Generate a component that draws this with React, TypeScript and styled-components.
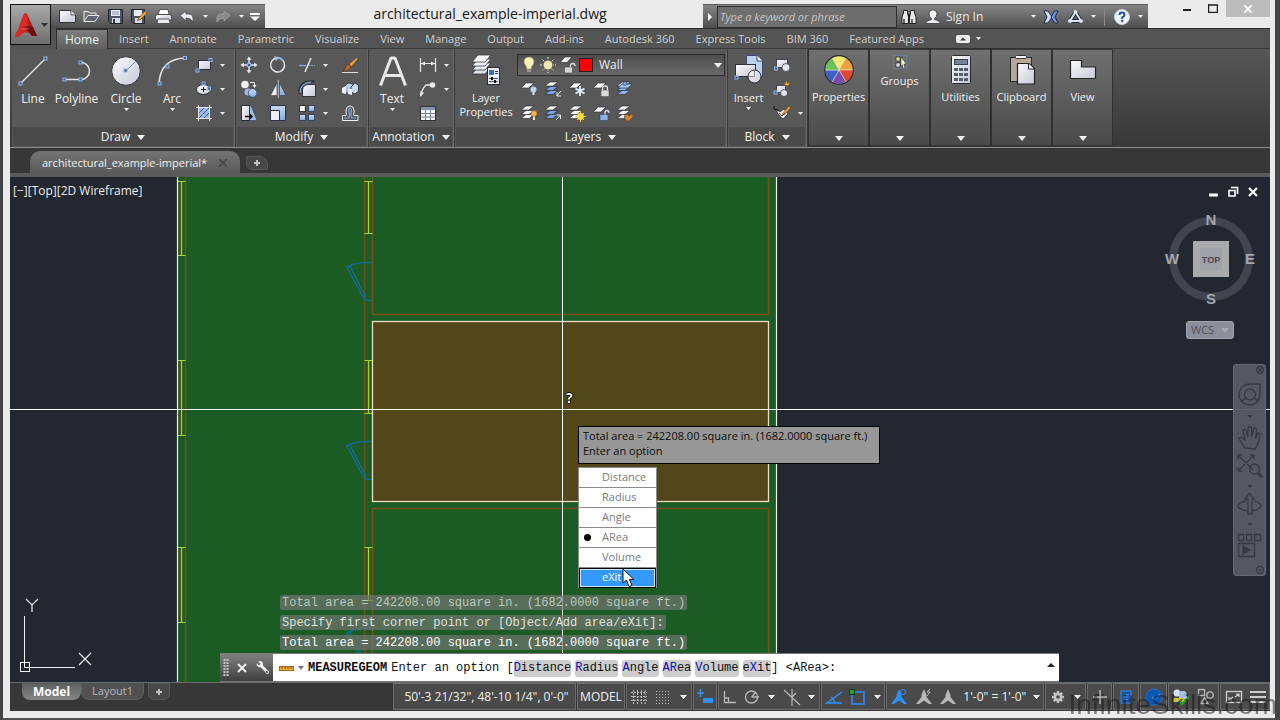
import React from 'react';
import styled, { createGlobalStyle, css } from 'styled-components';

const UI = '"Open Sans", "Noto Sans", sans-serif';
const MONO = '"Liberation Mono", "DejaVu Sans Mono", monospace';

const Global = createGlobalStyle`
  * { box-sizing: border-box; }
  body { margin: 0; background: #444446; font-family: ${UI}; font-size: 12px; line-height: 16px; color: #e8e8e8; overflow: hidden; }
  button, input, select { font: inherit; color: inherit; }
  button { border: 0; padding: 0; background: none; cursor: pointer; white-space: nowrap; }
  svg { display: block; flex: none; }
`;

/* ---------- icon helpers ---------- */

type Kids = { children?: React.ReactNode };

const Ico = ({ w = 18, h = 18, children }: Kids & { w?: number; h?: number }) => (
  <svg width={w} height={h} viewBox={`0 0 ${w} ${h}`} fill="none" aria-hidden="true">{children}</svg>
);

const Caret = ({ w = 7, h = 4, color = '#f2f2f2' }: { w?: number; h?: number; color?: string }) => (
  <svg width={w} height={h} viewBox={`0 0 ${w} ${h}`} aria-hidden="true"><path d={`M0 0H${w}L${w / 2} ${h}Z`} fill={color} /></svg>
);

const Grip = ({ x, y }: { x: number; y: number }) => (
  <rect x={x - 1.5} y={y - 1.5} width="3" height="3" fill="#4a5a78" stroke="#8fb4ee" />
);

const DefsHost = styled.svg`position: absolute;`;
const Defs = () => (
  <DefsHost width="0" height="0" aria-hidden="true">
    <defs>
      <linearGradient id="pale" x1="0" y1="0" x2="1" y2="1">
        <stop offset="0" stopColor="#fbfbfd" /><stop offset="1" stopColor="#c6c9d6" />
      </linearGradient>
      <linearGradient id="blue" x1="0" y1="0" x2="0" y2="1">
        <stop offset="0" stopColor="#c9dcf8" /><stop offset="1" stopColor="#86a9de" />
      </linearGradient>
      <linearGradient id="redA" x1="0" y1="0" x2="1" y2="0">
        <stop offset="0" stopColor="#e8332c" /><stop offset="1" stopColor="#8e1212" />
      </linearGradient>
    </defs>
  </DefsHost>
);

/* ---------- quick access icons ---------- */

const AppLogo = () => (
  <Ico w={24} h={26}>
    <path d="M1 25L9 4Q11 0 13 2L23 24H18Q12 16 5 25Z" fill="url(#redA)" />
    <path d="M9 4L6 16Q2 19 1 25H5Q8 18 14 17L13 2Q10 0 9 4Z" fill="#d92a24" />
    <path d="M6 16Q13 13 19 15L23 24H18Q13 15 6 16Z" fill="#6e0c0e" />
    <path d="M6 16Q12 14 16 17L10 18Z" fill="#f0645c" opacity=".6" />
  </Ico>
);
const NewIcon = () => <Ico w={17} h={15}><path d="M.5 1.5H12L16.5 6V13.5H.5Z" fill="url(#pale)" stroke="#333" /><path d="M12 1.5V6H16.5" fill="#fff" stroke="#555" /></Ico>;
const OpenIcon = () => <Ico w={17} h={15}><path d="M1 12.5V2.5H5L7 4H13V7" stroke="#e8e8ee" fill="#777" /><path d="M1 12.5L5 6.5H16L12 12.5Z" fill="#62656e" stroke="#e8e8ee" /></Ico>;
const SaveIcon = () => <Ico w={15} h={15}><path d="M.5 .5H14.5V14.5H2.5L.5 12.5Z" fill="#4c5566" stroke="#20252e" /><rect x="3" y="1" width="9" height="6" fill="#e9ebf2" /><path d="M4 3H11M4 5H11" stroke="#8890a4" /><rect x="4" y="9" width="8" height="5" fill="#d5d9e4" /><rect x="5" y="10" width="2" height="4" fill="#333a48" /></Ico>;
const SaveAsIcon = () => <Ico w={17} h={15}><path d="M.5 .5H13.5V14.5H2.5L.5 12.5Z" fill="#4c5566" stroke="#20252e" /><rect x="3" y="1" width="8" height="6" fill="#e9ebf2" /><rect x="4" y="9" width="7" height="5" fill="#d5d9e4" /><path d="M7 10L14 2L16 4L9 11L6.500 11.500Z" fill="#f3a63a" stroke="#7a4b12" strokeWidth=".7" /></Ico>;
const PlotIcon = () => <Ico w={17} h={15}><path d="M3 5L5 .5H13L14 5" fill="#fff" stroke="#555" /><rect x=".5" y="5.500" width="16" height="6" rx="2" fill="url(#pale)" stroke="#444" /><path d="M3 10H14L15 14.500H2Z" fill="#eee" stroke="#555" /></Ico>;
const UndoIcon = ({ off }: { off?: boolean }) => <Ico w={16} h={14}><g transform={off ? 'matrix(-1 0 0 1 16 0)' : undefined}><path d="M1 5.500L7 1V4H10Q15 4 14 12Q12 8 7 8V11Z" fill={off ? '#8a8a8a' : '#eef0f6'} stroke={off ? '#a4a4a4' : '#3c3f48'} strokeWidth=".8" /></g></Ico>;
const CustomizeIcon = () => <Ico w={10} h={8}><path d="M0 1H10" stroke="#fff" strokeWidth="2" /><path d="M0 3.500H10L5 8Z" fill="#fff" /></Ico>;

const BinocIcon = () => <Ico w={16} h={16}><path d="M2.500 4V1.500H6.500V4L7.500 8V14.500H1V8ZM9.500 4V1.500H13.500V4L15 8V14.500H8.500V8Z" fill="#e8e8ec" stroke="#222" /><path d="M7 5H9V9H7Z" fill="#222" /><path d="M3 10V14M11 10V14" stroke="#666" strokeWidth="2" /></Ico>;
const UserIcon = () => <Ico w={16} h={16}><path d="M4 4.500Q4 .8 8 .8Q12 .8 12 4.500Q12 8 9.500 9.500V10.500Q15 11.500 15.500 14.500H.5Q1 11.500 6.500 10.500V9.500Q4 8 4 4.500Z" fill="#f1f1f6" stroke="#333" strokeWidth=".8" /></Ico>;
const ExchangeIcon = () => <Ico w={16} h={14}><path d="M1 1H5L9 7L5 13H1L4 7Z" fill="#cfdcf5" stroke="#1e2c4d" /><path d="M15 1H11.500L8 7L11.500 13H15L12 7Z" fill="#6f95d8" stroke="#1e2c4d" /></Ico>;
const A360Icon = () => <Ico w={17} h={15}><path d="M8.500 3L14 12H3Z" stroke="#20283c" strokeWidth="4" strokeLinejoin="round" /><path d="M8.500 3L14 12H3Z" stroke="#dfe4f2" strokeWidth="2" /><circle cx="8.500" cy="3" r="2" fill="#dfe4f2" /><circle cx="14" cy="12" r="2" fill="#dfe4f2" /><circle cx="3" cy="12" r="2" fill="#dfe4f2" /></Ico>;
const HelpIcon = () => <Ico w={16} h={16}><circle cx="8" cy="8" r="7.500" fill="#f0f4fb" stroke="#c8cfdc" /><path d="M5.500 6Q5.500 3.600 8 3.600Q10.500 3.600 10.500 6Q10.500 7.200 8.200 8.300V10" stroke="#24519c" strokeWidth="2" /><circle cx="8.200" cy="12" r="1.200" fill="#24519c" /></Ico>;

/* ---------- ribbon icons ---------- */

const LineIcon = () => <Ico w={32} h={32}><path d="M3 29L28 4" stroke="#f0f0f0" strokeWidth="1.300" /><Grip x={28.5} y={3.500} /><Grip x={3.500} y={28.500} /></Ico>;
const PolyIcon = () => <Ico w={32} h={32}><path d="M3 24.500H20A8.500 8.500 0 0 0 20 7.500" stroke="#e6e6e6" strokeWidth="1.500" /><Grip x={3.500} y={24.500} /><Grip x={19.500} y={24.500} /><Grip x={19.500} y={7.500} /></Ico>;
const CircleIcon = () => <Ico w={32} h={32}><circle cx="16" cy="16" r="14.300" fill="url(#pale)" stroke="#3a3c44" /><path d="M16 16L26 6" stroke="#6b8fd0" /><Grip x={15.500} y={15.500} /></Ico>;
const ArcIcon = () => <Ico w={32} h={32}><path d="M3 29Q4 4 29 3" stroke="#e6e6e6" strokeWidth="1.500" /><Grip x={3.500} y={28.500} /><Grip x={11.500} y={11.500} /><Grip x={29} y={3} /></Ico>;
const RectIcon = () => <Ico><rect x="3.500" y="4.500" width="12" height="9" fill="url(#pale)" stroke="#2e3038" /><Grip x={2.500} y={14.500} /><Grip x={15.500} y={4} /></Ico>;
const EllipseIcon = () => <Ico><ellipse cx="8.500" cy="9.500" rx="7" ry="5" fill="url(#pale)" stroke="#2e3038" /><path d="M6 9.500H11M8.500 7V12" stroke="#222" /><Grip x={14} y={8.500} /><Grip x={8.500} y={3.500} /></Ico>;
const HatchIcon = () => <Ico><rect x="3.500" y="3.500" width="11" height="11" fill="#9db7e4" /><path d="M4 9L9 4M4 14L14 4M9 14L14 9" stroke="#3f5f97" /><path d="M3.500 1V17M14.500 1V17M1 3.500H17M1 14.500H17" stroke="#e8ecf6" /></Ico>;

const MoveIcon = () => <Ico><path d="M9 0L12 4H10V8H14V6L18 9L14 12V10H10V14H12L9 18L6 14H8V10H4V12L0 9L4 6V8H8V4H6Z" fill="#e6e9f2" stroke="#3e4046" strokeWidth=".5" /><Grip x={9} y={9} /></Ico>;
const RotateIcon = () => <Ico><path d="M13.500 4A7 7 0 1 1 8.500 2" stroke="#e2e4ec" strokeWidth="1.500" /><path d="M13.500 4A7 7 0 0 0 7 2" stroke="#8fb0ea" strokeWidth="2" /><path d="M5 0L10 1.500L7 5Z" fill="#a9c4f2" /></Ico>;
const TrimIcon = () => <Ico><path d="M1 9.500H8" stroke="#7fa3e6" strokeWidth="1.500" /><path d="M10 9.500H17" stroke="#7fa3e6" strokeDasharray="2 1" /><path d="M7 16L13 2" stroke="#e8e8ee" strokeWidth="1.500" /></Ico>;
const BrushIcon = () => <Ico><path d="M16.500 1L8 8L10 11L17 3Z" fill="#f1a53c" stroke="#5e3a10" strokeWidth=".6" /><path d="M8 8L10 11Q7 16 2 15Q5 13 5 10Z" fill="#c26a28" stroke="#4b280c" strokeWidth=".6" /><path d="M1 16.500H17" stroke="#ddd" /></Ico>;
const CopyIcon = () => <Ico><circle cx="5" cy="4.500" r="3.800" fill="#f0f1f6" /><circle cx="8" cy="12" r="3.500" fill="#9ebbec" /><circle cx="12.500" cy="13" r="4.300" fill="url(#blue)" stroke="#41506e" strokeWidth=".8" /><path d="M10 2.500H14.500V6" stroke="#e8e8ee" /><path d="M12.500 5H16.500L14.500 8Z" fill="#e8e8ee" /></Ico>;
const MirrorIcon = () => <Ico><path d="M8 3V15.500H1.500Z" fill="#eceef5" stroke="#383a42" strokeWidth=".6" /><path d="M10.500 3V15.500H17Z" fill="url(#blue)" stroke="#383a42" strokeWidth=".6" /><path d="M9.300 0V18" stroke="#ddd" strokeWidth=".8" /></Ico>;
const FilletIcon = () => <Ico><path d="M4.500 16.500V10Q5 4.500 11 4.500H17.500V16.500Z" fill="url(#pale)" stroke="#33353c" /><path d="M1.500 14Q1 2 13 1.500H17" stroke="#30343e" strokeWidth="2.500" /><path d="M2 13Q2 3 13 2" stroke="#9dbcf0" /></Ico>;
const ExplodeIcon = () => <Ico><path d="M3 7L7 3L12 4V10L8 14L3 12Z" fill="url(#blue)" stroke="#3d4454" /><path d="M10 7L14 3L17.500 5V11L14 14L10 12Z" fill="#c8d9f4" stroke="#3d4454" /><path d="M1 8L5 6V14L1 13Z" fill="#eef1f8" /><path d="M7 9H11V15L7 14Z" fill="#e4eaf6" /></Ico>;
const StretchIcon = () => <Ico><path d="M11 1.500L17 16.500H8V1.500Z" fill="#9fbdec" stroke="#3c465a" strokeWidth=".7" /><rect x="1.500" y="1.500" width="8" height="15" fill="url(#pale)" stroke="#2c2e36" /><path d="M5 12.500H11" stroke="#000" strokeWidth="1.500" /><path d="M10 9.500L13 12.500L10 15.500Z" fill="#000" /></Ico>;
const ScaleIcon = () => <Ico><path d="M1.500 1.500H16.500V16.500H1.500Z" fill="url(#blue)" stroke="#2c3240" /><path d="M1.500 6.500H10.500V16.500H1.500Z" fill="#eef0f6" stroke="#2c3240" /></Ico>;
const ArrayIcon = () => <Ico><rect x="1.500" y="1.500" width="6" height="6" fill="#f2f3f7" stroke="#333" /><rect x="10.500" y="1.500" width="6" height="6" fill="url(#blue)" stroke="#39465f" /><rect x="1.500" y="10.500" width="6" height="6" fill="url(#blue)" stroke="#39465f" /><rect x="10.500" y="10.500" width="6" height="6" fill="url(#blue)" stroke="#39465f" /></Ico>;
const OffsetIcon = () => <Ico><path d="M1.500 16.500H17V11.500H13Q12 10.500 13 9V6Q12.500 2 9 2Q5.500 2 5 6V9Q6 10.500 5 11.500H1.500Z" stroke="#eef1f8" /><path d="M3 14H8Q9 9 7.500 7Q7.500 4.500 9 4.500Q10.500 4.500 10.500 7Q9.500 9 10.500 14H15" stroke="#82a5e0" strokeWidth="1.200" /></Ico>;

const TextAIcon = () => <Ico w={32} h={32}><path d="M4.500 30.500L15 3H19L29.500 30.500M9 20.500H25" stroke="#e9e9ec" strokeWidth="3" strokeLinejoin="bevel" /></Ico>;
const DimIcon = () => <Ico><path d="M1.500 2V16M16.500 2V16M2 7.500H16" stroke="#e8e8ee" strokeWidth="1.200" /><path d="M2 7.500L6 5.500V9.500ZM16 7.500L12 5.500V9.500Z" fill="#e8e8ee" /></Ico>;
const LeaderIcon = () => <Ico><path d="M1.500 16Q3 9 7 5H12" stroke="#e8e8ee" strokeWidth="1.300" /><circle cx="13.500" cy="5" r="2.800" fill="#e8e8ee" /><path d="M1 17L1.500 11L5 13Z" fill="#e8e8ee" /></Ico>;
const TableIcon = () => <Ico><rect x="1.500" y="2.500" width="15" height="14" fill="#f2f3f7" stroke="#333" /><path d="M2 4.500H16" stroke="#8b93a8" strokeWidth="3" /><path d="M2 9.500H16M2 13H16M6.500 6V16M11.500 6V16" stroke="#7f8594" /></Ico>;

const sheet = (y: number, fill: string) => (
  <path key={y} d={`M1 ${y + 7}L7 ${y}H20L14 ${y + 7}Z`} fill={fill} stroke="#303238" strokeWidth=".8" />
);
const LayerPropsIcon = () => (
  <Ico w={30} h={32}>
    {sheet(13, '#dfe2ec')}{sheet(9, '#eceef4')}{sheet(5, '#f2f3f8')}{sheet(1, '#ffffff')}
    <rect x="16.500" y="13.500" width="12" height="17" fill="#e9edf6" stroke="#2a2e38" />
    <rect x="18" y="16" width="5" height="5" fill="#3a6fc0" /><path d="M24 17.500H27M24 19.500H27" stroke="#333" />
    <path d="M18 24.500H27M18 27.500H27" stroke="#555" /><path d="M21 23V26M24 26V29" stroke="#111" strokeWidth="2" />
  </Ico>
);
const BulbIcon = () => <Ico w={16} h={18}><path d="M8 1Q13 1 13 6Q13 8 10.500 11V13H5.500V11Q3 8 3 6Q3 1 8 1Z" fill="#fdf3bd" stroke="#8f8250" strokeWidth=".6" /><path d="M6 13.500H10V16H6Z" fill="#9b9b9b" /></Ico>;
const SunIcon = ({ c = '#efe6b4' }: { c?: string }) => <Ico w={18} h={18}><path d="M9 1V17M1 9H17M3.500 3.500L14.500 14.500M14.500 3.500L3.500 14.500" stroke={c} strokeDasharray="2 1" /><circle cx="9" cy="9" r="4.800" fill={c} stroke="#5b573c" strokeWidth=".8" /></Ico>;
const UnlockIcon = () => <Ico w={18} h={18}><path d="M1 6.500L6 1H13L8 6.500Z" fill="#fff" stroke="#222" strokeWidth=".6" /><rect x="5.500" y="11" width="8" height="6" fill="#d4d4d8" stroke="#333" strokeWidth=".5" /><path d="M11.500 11V9Q12 7.500 14 7.500Q16 7.500 16 10" stroke="#ddd" strokeWidth="1.300" /></Ico>;

const one = <path d="M1 8L6 3H14L9 8Z" fill="#fafafc" stroke="#2e3036" strokeWidth=".7" />;
const stack = (mid = '#fafafc') => (
  <>
    <path d="M1 14.500L6 10.500H14L9 14.500Z" fill={mid} stroke="#2e3036" strokeWidth=".7" />
    <path d="M1 10.500L6 6.500H14L9 10.500Z" fill={mid} stroke="#2e3036" strokeWidth=".7" />
    <path d="M1 6L6 2H14L9 6Z" fill="#fafafc" stroke="#2e3036" strokeWidth=".7" />
  </>
);
const LayOff = () => <Ico>{one}<circle cx="13.500" cy="9.500" r="3" fill="#b9d3f5" /><path d="M12.500 12H14.500V15H12.500Z" fill="#dde4f0" /></Ico>;
const LayIso = () => <Ico>{stack('#7da2dd')}<path d="M17 11L13 15.500M13 12V16H17" stroke="#e8e8ee" /></Ico>;
const LayFreeze = () => <Ico>{one}<path d="M12 6V16M7.500 8.500L16.500 13.500M16.500 8.500L7.500 13.500" stroke="#dff1ff" strokeWidth="1.800" /></Ico>;
const LayLock = () => <Ico>{one}<rect x="9" y="10" width="8" height="6.500" fill="#d9d9dc" stroke="#444" strokeWidth=".5" /><path d="M10.500 10V8Q10.500 6 13 6Q15.500 6 15.500 8V10" stroke="#e3e3e6" strokeWidth="1.300" /></Ico>;
const LayMake = () => <Ico>{stack('#8db0e8')}<path d="M2 8L6 4H16L12 8Z" fill="#a9c6f2" stroke="#2a3b5c" strokeWidth=".7" /><circle cx="9" cy="3.500" r="2" fill="#7fa6e6" stroke="#21304e" strokeWidth=".6" /></Ico>;
const LayOn = () => <Ico>{stack()}<circle cx="14" cy="9.500" r="3" fill="#f7b24a" stroke="#7d5010" strokeWidth=".5" /><path d="M13 12.500H15V16H13Z" fill="#f2e2bd" /></Ico>;
const LayUniso = () => <Ico>{stack('#7da2dd')}<path d="M12 16L16.500 11M12.500 11H16.500V15" stroke="#e8e8ee" /></Ico>;
const LayThaw = () => <Ico>{stack()}<path d="M12.500 7V18M7 12.500H18M9 9L16 16M16 9L9 16" stroke="#f7cf3f" /><circle cx="12.500" cy="12.500" r="3.400" fill="#ffd93f" /></Ico>;
const LayUnlock = () => <Ico>{one}<rect x="8" y="10.500" width="8" height="6" fill="#8fb0e6" stroke="#34445f" strokeWidth=".6" /><path d="M13 10.500V8Q13.500 6.500 15 6.500Q17 6.500 17 9" stroke="#cddcf5" strokeWidth="1.300" /></Ico>;
const LayMatch = () => <Ico>{stack()}<path d="M8 12L11 10L13 12L16.500 9.500L17 13L13 17H10Z" fill="#c7853c" stroke="#5c3813" strokeWidth=".6" /></Ico>;

const InsertIcon = () => (
  <Ico w={32} h={32}>
    <path d="M13.500 1.500H24L29.500 7V22.500H13.500Z" fill="#b9d0f2" stroke="#384865" /><path d="M24 1.500V7H29.500" fill="#fff" stroke="#384865" />
    <rect x="2.500" y="10.500" width="20" height="12" fill="url(#pale)" stroke="#2e3038" />
    <circle cx="21.500" cy="22.500" r="6.500" fill="url(#pale)" stroke="#2e3038" /><path d="M21.500 16V22.500H15" stroke="#6f7480" strokeWidth=".8" /><Grip x={3.500} y={23.500} />
  </Ico>
);
const BlockIcon = () => <Ico><rect x="3.500" y="3.500" width="11" height="8" fill="url(#pale)" stroke="#2e3038" strokeWidth=".8" /><circle cx="13" cy="11.500" r="4" fill="#e3e5ec" stroke="#3c3e46" strokeWidth=".8" /><Grip x={3} y={12.500} /></Ico>;
const BlockEditIcon = () => <Ico><rect x="3.500" y="5.500" width="9" height="7" fill="url(#pale)" stroke="#2e3038" strokeWidth=".8" /><circle cx="11" cy="13" r="3.500" fill="#e3e5ec" stroke="#3c3e46" strokeWidth=".8" /><path d="M11 5L14 1L14.500 3.500L17.500 2L15 6L13 5.500Z" fill="#f7b13c" stroke="#6b440e" strokeWidth=".4" /><Grip x={2.500} y={12.500} /></Ico>;
const AttIcon = () => <Ico><path d="M3 5L5 10L10 15L15 10L11 5L7 8Z" fill="#f3f3ee" stroke="#2e3038" strokeWidth=".8" /><path d="M1 2V5Q3 6 6 6" stroke="#111" /><path d="M9 10L16 2L17.500 4L11 11Z" fill="#eda63b" stroke="#5c3a0e" strokeWidth=".5" /><path d="M6 9L9 12L12 9" stroke="#222" /></Ico>;

const wheel = ['#f6e96b', '#f0a03a', '#e04a2c', '#7a4bb0', '#3a63c8', '#6cc05a'];
const WheelIcon = () => (
  <Ico w={32} h={32}>
    {wheel.map((c, i) => {
      const a = ((i * 60 - 120) * Math.PI) / 180;
      const b = ((i * 60 - 60) * Math.PI) / 180;
      return <path key={c} d={`M16 16L${16 + 14 * Math.cos(a)} ${16 + 14 * Math.sin(a)}A14 14 0 0 1 ${16 + 14 * Math.cos(b)} ${16 + 14 * Math.sin(b)}Z`} fill={c} stroke="#f1efe6" strokeWidth=".5" />;
    })}
    <circle cx="16" cy="16" r="14.300" stroke="#26262a" strokeWidth="1.200" />
  </Ico>
);
const GroupsIcon = () => <Ico w={16} h={16}><rect x="1.500" y="1.500" width="13" height="13" stroke="#6b8fd6" strokeDasharray="1 1" /><rect x="4" y="3" width="4" height="4" fill="#d5e08a" stroke="#222" strokeWidth=".6" /><rect x="4" y="9" width="4" height="4" fill="#dfe5f5" stroke="#222" strokeWidth=".6" /><path d="M9 3L14.500 10H12L13 14L11 14.500L10.500 11L9 12Z" fill="#f2efc0" stroke="#222" strokeWidth=".5" /></Ico>;
const CalcIcon = () => (
  <Ico w={32} h={32}>
    <rect x="6.500" y="1.500" width="19" height="28" rx="1" fill="url(#pale)" stroke="#2a2c34" /><rect x="9.500" y="5.500" width="13" height="5" fill="#7b8294" stroke="#3a3e4a" />
    {[14, 19, 24].map((y) => [9, 14, 19].map((x) => <rect key={`${x}-${y}`} x={x} y={y} width="4" height="3" fill="#555c6e" />))}
  </Ico>
);
const ClipIcon = () => <Ico w={32} h={32}><rect x="4.500" y="3.500" width="21" height="24" fill="#b3a89a" stroke="#2c2a28" /><rect x="9.500" y="1.500" width="11" height="3" rx="1" fill="#f5f5f7" stroke="#333" /><path d="M11.500 9.500H23L28.500 14.500V30H11.500Z" fill="url(#pale)" stroke="#222" strokeWidth="1.200" /><path d="M22.500 9.500V15H28" fill="#fff" stroke="#222" /></Ico>;
const ViewIcon = () => <Ico w={32} h={32}><path d="M3.500 6.500H14.500V13H28.500V24.500H3.500Z" fill="url(#pale)" stroke="#26262a" strokeWidth="1.200" /></Ico>;

/* ---------- shell ---------- */

const Shell = styled.div`
  min-height: 100vh;
  display: flex;
  flex-direction: column;
  margin: 0 5px 0 3px;
  padding: 0 5px 7px 7px;
  background: #ebebeb;
  border-bottom: 2px solid #505052;
`;
const Header = styled.header`
  display: grid;
  grid-template-columns: 46px 1fr;
  grid-template-rows: 28px 21px;
  background: linear-gradient(#ebebeb 0 28px, #545454 28px);
`;
const AppButton = styled.button`
  grid-row: 1 / 3;
  width: 41px;
  height: 41px;
  margin-top: 4px;
  display: flex;
  align-items: center;
  justify-content: center;
  gap: 3px;
  border: 1px solid #111;
  background: linear-gradient(#a9a9a9, #6e6e6e);
`;
const TitleBar = styled.div`
  display: flex;
  align-items: flex-end;
  margin-left: -5px;
`;
const DarkStrip = styled.div`
  display: flex;
  align-items: center;
  height: 24px;
  padding: 0 2px 0 4px;
  border-top: 1px solid #5c5c5c;
  background: linear-gradient(#858585, #4e4e4e);
`;
const Slot = styled.button<{ $w: number }>`
  width: ${(p) => p.$w}px;
  height: 22px;
  display: flex;
  align-items: center;
  justify-content: center;
`;
const WindowTitle = styled.h1`
  flex: 1;
  margin: 0;
  padding-left: 12px;
  align-self: center;
  text-align: center;
  font-size: 14px;
  font-weight: 400;
  color: #161616;
`;
const InfoStrip = styled(DarkStrip)`padding: 0 2px 0 0;`;
const Search = styled.input`
  width: 180px;
  height: 22px;
  padding: 0 2px;
  border: 1px solid #2e2e2e;
  border-radius: 0;
  font-size: 11px;
  background: #6e6e6e;
  outline: none;
  &::placeholder { color: #c4c4c4; opacity: 1; font-style: italic; }
`;
const SignIn = styled.button`
  flex: none;
  width: 82px;
  padding-left: 1px;
  text-align: left;
`;
const Rule = styled.span`width: 1px; height: 18px; margin: 0 5px; background: #8a8a8a;`;
const WindowButtons = styled.div`
  display: flex;
  align-self: flex-start;
  margin-left: 26px;
`;
const WinButton = styled.button<{ $close?: boolean }>`
  width: ${(p) => (p.$close ? 44 : 26)}px;
  height: 17px;
  display: flex;
  align-items: center;
  justify-content: center;
  ${(p) => p.$close && css`background: #bcbcbc;`}
`;

const Tabs = styled.nav`
  display: flex;
  align-items: stretch;
  font-size: 11px;
  border-top: 1px solid #2e2e2e;
  border-bottom: 1px solid #383838;
`;
const Tab = styled.button<{ $on?: boolean }>`
  padding: 0 9px 0 10px;
  color: #cfcfcf;
  border: 1px solid transparent;
  border-bottom: 0;
  ${(p) => p.$on && css`
    color: #f0f0f0;
    margin-bottom: -1px;
    font-size: 12px;
    padding: 0 8px;
    border-color: #2e2e2e;
    background: linear-gradient(#7d7d7d, #5f5f5f);
  `}
`;
const TabExtra = styled.button`
  display: flex;
  align-items: center;
  gap: 6px;
  margin-left: 22px;
`;

/* ---------- ribbon ---------- */

const Ribbon = styled.section`
  display: flex;
  height: 99px;
  padding-left: 2px;
  background: linear-gradient(#565656, #383838);
  border-bottom: 1px solid #8c8c8c;
`;
const PanelBox = styled.div<{ $w: number }>`
  width: ${(p) => p.$w}px;
  flex: none;
  display: flex;
  flex-direction: column;
  background: #585858;
  border-right: 1px solid #3a3a3a;
  box-shadow: inset -1px 0 #686868;
`;
const PanelBody = styled.div`height: 78px; display: flex; padding-top: 4px;`;
const PanelTitle = styled.button`
  height: 19px;
  margin: 0 2px 0 1px;
  padding-top: 1px;
  display: flex;
  align-items: center;
  justify-content: center;
  gap: 7px;
  background: #4a4a4a;
  color: #f2f2f2;
`;
const Panel = ({ w, title, children }: Kids & { w: number; title: string }) => (
  <PanelBox $w={w}>
    <PanelBody>{children}</PanelBody>
    <PanelTitle>{title}<Caret w={8} h={5} /></PanelTitle>
  </PanelBox>
);
const BigButton = styled.button<{ $w: number; $tight?: boolean }>`
  width: ${(p) => p.$w}px;
  height: 74px;
  padding-top: ${(p) => (p.$tight ? 1 : 2)}px;
  display: flex;
  flex-direction: column;
  align-items: center;
  font-size: ${(p) => (p.$tight ? 11 : 12)}px;
  line-height: 14px;
  white-space: pre-line;
  color: #f0f0f0;
  & > svg:first-child { margin-bottom: 5px; }
  & > svg + svg { margin-top: 2px; }
`;
const Big = ({ w, label, icon, menu, tight }: { w: number; label: string; icon: React.ReactNode; menu?: boolean; tight?: boolean }) => (
  <BigButton $w={w} $tight={tight}>{icon}{label}{menu && <Caret w={5} h={3} />}</BigButton>
);
const Column = styled.div<{ $w: number }>`
  width: ${(p) => p.$w}px;
  display: flex;
  flex-direction: column;
`;
const Small = styled.button`
  height: 24px;
  display: flex;
  align-items: center;
  justify-content: flex-start;
  padding-left: 4px;
  gap: 7px;
`;
const Tools = ({ w, items, menus = [] }: { w: number; items: React.ReactNode[]; menus?: number[] }) => (
  <Column $w={w}>
    {items.map((it, i) => <Small key={i}>{it}{menus.includes(i) && <Caret w={5} h={3} />}</Small>)}
  </Column>
);
const LayerArea = styled.div`flex: 1; padding: 1px 2px 0 0;`;
const LayerCombo = styled.div`
  display: flex;
  align-items: center;
  gap: 2px;
  height: 22px;
  padding: 0 2px 0 3px;
  margin-bottom: 1px;
  border: 1px solid #2c2c2c;
  background: linear-gradient(#4e4e4e, #696969);
`;
const Swatch = styled.span`width: 14px; height: 14px; margin-right: 4px; background: #fe0000; border: 1px solid #222;`;
const LayerSelect = styled.select`
  flex: 1;
  min-width: 0;
  appearance: none;
  border: 0;
  padding: 0;
  background: transparent;
  outline: none;
`;
const LayerGrid = styled.div`
  display: grid;
  grid-template-columns: repeat(5, 24px);
  grid-auto-rows: 24px;
`;
const LayerTool = styled.button`display: flex; align-items: center; justify-content: center;`;
const FoldedPanel = styled.button`
  width: 59px;
  margin: 0 1px 2px;
  padding: 4px 0;
  display: flex;
  flex-direction: column;
  align-items: center;
  font-size: 11px;
  color: #f0f0f0;
  border: solid #3a3a3a;
  border-width: 1px 0 0;
  outline: 1px solid #303030;
  background: linear-gradient(#707070, #4a4a4a);
  & > svg:first-child { margin-bottom: 3px; }
  & > svg:last-child { margin-top: auto; margin-bottom: 0; }
`;

/* ---------- document tabs ---------- */

const DocTabs = styled.div`
  display: flex;
  align-items: flex-end;
  height: 29px;
  padding-left: 20px;
  background: #373737;
  border-bottom: 4px solid #5a5a5a;
`;
const DocTab = styled.button`
  height: 22px;
  display: flex;
  align-items: center;
  gap: 12px;
  padding: 2px 13px 0 12px;
  border-radius: 10px 10px 0 0;
  font-size: 11px;
  background: linear-gradient(#747474, #5a5a5a);
  color: #f0f0f0;
`;
const AddTab = styled.button<{ $foot?: boolean }>`
  width: 22px;
  height: ${(p) => (p.$foot ? 17 : 14)}px;
  display: flex;
  align-items: center;
  justify-content: center;
  margin: ${(p) => (p.$foot ? '0' : '0 0 3px 6px')};
  border: 1px solid #585858;
  border-radius: ${(p) => (p.$foot ? '0 0 6px 6px' : '2px 8px 2px 6px')};
  background: #484848;
`;
const Plus = () => <Ico w={8} h={8}><path d="M4 1V7M1 4H7" stroke="#c2c2c2" strokeWidth="2" /></Ico>;

/* ---------- drawing area ---------- */

const Canvas = styled.main`
  position: relative;
  flex: 1;
  min-height: 400px;
  overflow: hidden;
  background: #222730;
`;
const DrawingSvg = styled.svg`position: absolute; inset: 0; width: 100%; height: 100%;`;

const Opening = ({ x, y, h }: { x: number; y: number; h: number }) => (
  <g>
    <rect x={x - 3} y={y} width="7" height={h} fill="#2f5a1c" />
    <path d={`M${x - 3.500} ${y + 0.500}h8M${x - 3.500} ${y + h + 0.500}h8M${x + 0.500} ${y}v${h}`} stroke="#a0d838" strokeWidth="1.200" />
  </g>
);
const Door = ({ y }: { y: number }) => (
  <path d={`M362 ${y - 2.500}Q345 ${y - 3} 337 ${y + 2}L354 ${y + 34}Q356 ${y + 36} 362 ${y + 35.500}M340 ${y + 1}L356 ${y + 33}`} stroke="#146a96" strokeWidth="1.500" />
);
const Drawing = () => (
  <DrawingSvg fill="none" aria-label="Floor plan">
    <rect x="167" width="600" height="100%" fill="#1a5c23" />
    {[175.5, 354.5].map((x) => <path key={x} d={`M${x} 0V2000`} stroke="#70501a" strokeWidth="1.500" />)}
    <path d="M362.500 0V137.500H758.500V0M362.500 2000V331.500H758.500V2000" stroke="#79501a" strokeWidth="1.500" />
    {[[4, 74, 52], [183, 75, 53], [370, 75, 53]].map(([y, a, b]) => (
      <g key={y}><Opening x={171} y={y} h={a} /><Opening x={358} y={y} h={b} /></g>
    ))}
    <Door y={88} /><Door y={267} /><Door y={454} />
    <rect x="362.500" y="144.500" width="396" height="180" fill="#51471a" stroke="#f0dcc4" strokeWidth="1.300" />
    <path d="M167.500 0V2000M766.500 0V2000" stroke="#f2f2ea" strokeWidth="1.200" />
    <path d="M552.500 0V2000M0 232.500H4000" stroke="#ffffff" />
  </DrawingSvg>
);

const ViewLabel = styled.div`position: absolute; left: 3px; top: 6px; color: #ececec;`;
const Ucs = styled.svg`position: absolute; left: 8px; bottom: 8px;`;
const ViewButtons = styled.div`position: absolute; right: 11px; top: 9px; display: flex; gap: 9px;`;
const ViewCube = styled.div`position: absolute; right: 12px; top: 35px;`;
const Wcs = styled.button`
  position: absolute;
  right: 36px;
  top: 144px;
  width: 48px;
  height: 18px;
  display: flex;
  align-items: center;
  justify-content: space-between;
  padding: 0 4px;
  font-size: 11px;
  color: #4d505a;
  background: #8c8f9b;
  border: 1px solid #a3a6b0;
  border-radius: 3px;
`;
const NavBar = styled.div`
  position: absolute;
  right: 4px;
  top: 187px;
  width: 33px;
  height: 212px;
  display: flex;
  justify-content: center;
  background: #585b63;
  border: 1px solid #6a6d74;
  border-radius: 3px;
  opacity: .95;
`;
const QuestionMark = styled.span`
  position: absolute;
  left: 556px;
  top: 212px;
  font: 700 14px/17px ${UI};
  color: #fff;
  text-shadow: 1px 0 #000, -1px 0 #000, 0 1px #000, 0 -1px #000;
`;
const Tooltip = styled.div`
  position: absolute;
  left: 568px;
  top: 249px;
  width: 302px;
  height: 38px;
  padding: 1px 4px;
  font-size: 11px;
  line-height: 15px;
  white-space: nowrap;
  color: #0c0c0c;
  background: #979797;
  border: 1px solid #000;
`;
const OptionMenu = styled.div`
  position: absolute;
  left: 568px;
  top: 290px;
  width: 79px;
  font-size: 11px;
  border: 1px solid #8c8c8c;
  border-bottom: 0;
  background: #fff;
`;
const Option = styled.button<{ $on?: boolean }>`
  position: relative;
  display: block;
  width: 100%;
  height: 20px;
  padding: 0 0 2px ${(p) => (p.$on ? 22 : 23)}px;
  text-align: left;
  color: #7a7a7a;
  border-bottom: 1px solid #8c8c8c;
  ${(p) => p.$on && css`color: #fff; background: #3399ff; border: 1px solid #000; box-shadow: inset 0 0 0 1px #cfe6ff;`}
`;
const Dot = styled.span`position: absolute; left: 5px; top: 6px; width: 7px; height: 7px; border-radius: 50%; background: #000;`;
const Pointer = styled.svg`position: absolute; left: 612px; top: 391px;`;

const History = styled.div`
  position: absolute;
  left: 270px;
  bottom: 32px;
  display: flex;
  flex-direction: column;
  align-items: flex-start;
  gap: 5px;
`;
const HistoryLine = styled.div<{ $c: string }>`
  height: 15px;
  padding: 0 2px;
  font: 12px/16px ${MONO};
  white-space: pre;
  color: ${(p) => p.$c};
  background: rgba(112, 116, 112, .72);
  border-radius: 2px;
`;
const CommandBar = styled.div`
  position: absolute;
  left: 210px;
  bottom: 0;
  width: 839px;
  height: 29px;
  display: flex;
  align-items: stretch;
  background: #fff;
  border: solid #777;
  border-width: 1px 0;
`;
const CommandTools = styled.div`
  width: 53px;
  display: flex;
  align-items: center;
  justify-content: space-between;
  padding: 0 3px;
  background: linear-gradient(#828282, #3f3f3f);
`;
const CommandText = styled.div`
  flex: 1;
  display: flex;
  align-items: center;
  gap: 4px;
  padding: 1px 6px 0;
  font: 12px/17px ${MONO};
  color: #101010;
  white-space: pre;
`;
const Prompt = styled.span`display: flex; align-items: center;`;
const Chips = styled.span`display: flex; gap: 4px;`;
const Chip = styled.button`
  height: 17px;
  font: inherit;
  background: #cdcdcd;
  border-radius: 3px;
  b { font-weight: 400; color: #1212b4; }
`;
const IconBtn = styled.button`display: flex; align-items: center; gap: 4px;`;

/* ---------- status bar ---------- */

const Status = styled.footer`
  display: flex;
  align-items: flex-start;
  justify-content: space-between;
  height: 29px;
  padding-left: 12px;
  background: #373737;
  border-top: 1px solid #6a6a6a;
`;
const SheetTabs = styled.div`display: flex;`;
const SheetTab = styled.button<{ $on?: boolean }>`
  height: 17px;
  padding: 0 ${(p) => (p.$on ? 11 : 10)}px;
  border-radius: 0 0 8px 8px;
  font-size: ${(p) => (p.$on ? 12 : 11)}px;
  font-weight: ${(p) => (p.$on ? 700 : 400)};
  color: ${(p) => (p.$on ? '#ffffff' : '#b9b9b9')};
  background: ${(p) => (p.$on ? 'linear-gradient(#5c5c5c, #888)' : '#505050')};
  border: ${(p) => (p.$on ? 0 : '1px solid #5e5e5e')};
  border-top: 0;
  margin-right: ${(p) => (p.$on ? 0 : 4)}px;
`;
const StatusCells = styled.div`display: flex; gap: 1px; height: 27px;`;
const Cell = styled.div<{ $w: number }>`
  width: ${(p) => p.$w}px;
  display: flex;
  align-items: center;
  justify-content: space-around;
  color: #f0f0f0;
  white-space: nowrap;
  background: #4a4a4a;
  border: 1px solid #6c6c6c;
`;
const Coordinates = styled(Cell)`padding-left: 4px;`;
const Watermark = styled.div`
  position: fixed;
  right: 3px;
  bottom: 0;
  font: 28px/30px "Liberation Sans", sans-serif;
  color: rgba(20, 20, 20, .5);
  pointer-events: none;
`;

const Human = ({ c, extra }: { c: string; extra?: React.ReactNode }) => (
  <Ico w={18} h={18}><path d="M9 1L11.500 7V9L17 16H14L9 12.500L4 16H1L6.500 9V7Z" fill={c} />{extra}</Ico>
);
const G = '#b8b8b8';
const B = '#2e8fff';

const GridIcon = () => <Ico w={16} h={16}><path d="M2.500 1V15M6.500 1V15M10.500 1V15M14 1V15M0 3.500H16M0 7.500H16M0 11.500H16" stroke={G} strokeDasharray="2 1" /></Ico>;
const SnapIcon = () => <Ico w={16} h={16}>{[2, 5, 8, 11, 14].map((y) => <path key={y} d={`M1 ${y}.5H15`} stroke={G} strokeDasharray="1 2" />)}</Ico>;
const DynIcon = () => <Ico><path d="M4.500 1V9M1 5H8" stroke={B} strokeWidth="1.500" /><rect x="7" y="10" width="10" height="5" rx="1" fill={B} /></Ico>;
const OrthoIcon = () => <Ico w={14} h={14}><path d="M1.500 1V12.500H13M1.500 8H5.500V12.500" stroke={G} strokeWidth="1.300" /></Ico>;
const PolarIcon = () => <Ico w={16} h={16}><circle cx="7.500" cy="8" r="6" stroke={G} strokeWidth="1.300" /><path d="M7.500 8H15M7.500 8L12 3" stroke={G} strokeWidth="1.300" /></Ico>;
const IsoIcon = () => <Ico><path d="M1 2L17 17M9 1V18M9 9L13 5" stroke={G} strokeWidth="1.200" /></Ico>;
const TrackIcon = () => <Ico><path d="M17 4L2 15H17M6 9Q9 11 10 15" stroke={B} strokeWidth="1.500" /></Ico>;
const OsnapIcon = () => <Ico><rect x="3" y="4" width="12" height="12" stroke={B} strokeWidth="1.500" /><rect x=".5" y="1.500" width="5" height="5" fill="#1fa33a" stroke="#0b3d14" /></Ico>;
const GearIcon = () => <Ico w={14} h={14}><path d="M7 1V13M1 7H13M2.800 2.800L11.200 11.200M11.200 2.800L2.800 11.200" stroke="#c4c4c4" strokeWidth="2.500" /><circle cx="7" cy="7" r="4.200" fill="#c4c4c4" /><circle cx="7" cy="7" r="1.800" fill="#4a4a4a" /></Ico>;
const PlusBig = () => <Ico w={14} h={14}><path d="M7 0V14M0 7H14" stroke={G} strokeWidth="1.500" /></Ico>;
const QuickPropIcon = () => <Ico w={14} h={14}><rect x="2" y="1" width="10" height="12" fill="#1c4f94" stroke={B} /><path d="M4 4.500H10M4 7H10M4 9.500H10" stroke={B} /></Ico>;
const LockUiIcon = () => <Ico><circle cx="9" cy="9" r="8" fill="#0d57b4" stroke="#1f6fd4" /><path d="M7 9L10 12L15 6" stroke="#3d8fee" strokeWidth="1.300" /></Ico>;
const HwIcon = () => <Ico><circle cx="5" cy="5" r="3.500" fill="#d8e4f4" /><path d="M7 3H13L15 6V11H7Z" fill="#a9c0df" /><path d="M1 10H11L15 14H1Z" fill="#c9c739" /><path d="M7 13L10 16L17 9" stroke="#2ba32b" strokeWidth="2" /></Ico>;
const IsolateIcon = () => <Ico><rect x="1.500" y="1.500" width="6" height="6" stroke={G} strokeWidth="1.300" /><circle cx="13" cy="7" r="3.200" stroke={G} strokeWidth="1.300" /><path d="M7.500 9.500L11 15.500H4Z" stroke={G} strokeWidth="1.300" /></Ico>;
const CleanIcon = () => <Ico><rect x="1.500" y="3.500" width="15" height="11" stroke="#d0d0d0" strokeWidth="1.300" /><path d="M4 12L8 9M14 6L10 9M4 9V12H7M14 9V6H11" stroke="#d0d0d0" strokeWidth="1.200" /></Ico>;
const MenuIcon = () => <Ico w={16} h={14}><path d="M0 2H16M0 7H16M0 12H16" stroke="#d0d0d0" strokeWidth="2" /></Ico>;

const ribbonTabs = ['Insert', 'Annotate', 'Parametric', 'Visualize', 'View', 'Manage', 'Output', 'Add-ins', 'Autodesk 360', 'Express Tools', 'BIM 360', 'Featured Apps'];
const folded: [string, React.ReactNode][] = [['Properties', <WheelIcon />], ['Groups', <GroupsIcon />], ['Utilities', <CalcIcon />], ['Clipboard', <ClipIcon />], ['View', <ViewIcon />]];
const layerTools = [LayOff, LayIso, LayFreeze, LayLock, LayMake, LayOn, LayUniso, LayThaw, LayUnlock, LayMatch];
const chips: [string, string, string][] = [['', 'D', 'istance'], ['', 'R', 'adius'], ['', 'A', 'ngle'], ['', 'AR', 'ea'], ['', 'V', 'olume'], ['e', 'X', 'it']];

export default function App() {
  return (
    <Shell>
      <Global />
      <Defs />
      <Header>
        <AppButton aria-label="Application menu"><AppLogo /><Caret w={7} h={4} color="#333" /></AppButton>
        <TitleBar>
          <DarkStrip>
            <Slot $w={24} aria-label="New"><NewIcon /></Slot>
            <Slot $w={24} aria-label="Open"><OpenIcon /></Slot>
            <Slot $w={24} aria-label="Save"><SaveIcon /></Slot>
            <Slot $w={24} aria-label="Save as"><SaveAsIcon /></Slot>
            <Slot $w={24} aria-label="Plot"><PlotIcon /></Slot>
            <Slot $w={24} aria-label="Undo"><UndoIcon /></Slot>
            <Slot $w={12} aria-label="Undo list"><Caret w={5} h={3} /></Slot>
            <Slot $w={24} aria-label="Redo"><UndoIcon off /></Slot>
            <Slot $w={12} aria-label="Redo list"><Caret w={5} h={3} /></Slot>
            <Slot $w={16} aria-label="Customize"><CustomizeIcon /></Slot>
          </DarkStrip>
          <WindowTitle>architectural_example-imperial.dwg</WindowTitle>
          <InfoStrip>
            <Slot $w={14} aria-label="Collapse search"><Ico w={4} h={8}><path d="M0 0L4 4L0 8Z" fill="#fff" /></Ico></Slot>
            <Search placeholder="Type a keyword or phrase" aria-label="Search" />
            <Slot $w={24} aria-label="Find"><BinocIcon /></Slot>
            <Slot $w={24} aria-label="Account"><UserIcon /></Slot>
            <SignIn>Sign In</SignIn>
            <Slot $w={12} aria-label="Account menu"><Caret w={5} h={3} /></Slot>
            <Slot $w={24} aria-label="Exchange"><ExchangeIcon /></Slot>
            <Slot $w={24} aria-label="Autodesk 360"><A360Icon /></Slot>
            <Slot $w={12} aria-label="Autodesk 360 menu"><Caret w={5} h={3} /></Slot>
            <Rule />
            <Slot $w={24} aria-label="Help"><HelpIcon /></Slot>
            <Slot $w={12} aria-label="Help menu"><Caret w={5} h={3} /></Slot>
          </InfoStrip>
          <WindowButtons>
            <WinButton aria-label="Minimize"><Ico w={8} h={8}><path d="M0 5H8" stroke="#222" strokeWidth="2" /></Ico></WinButton>
            <WinButton aria-label="Maximize"><Ico w={10} h={9}><path d="M.5 0V8.500H9.500V1H0" stroke="#222" strokeWidth="1.500" /></Ico></WinButton>
            <WinButton $close aria-label="Close"><Ico w={8} h={8}><path d="M0 0L8 8M8 0L0 8" stroke="#fff" strokeWidth="1.800" /></Ico></WinButton>
          </WindowButtons>
        </TitleBar>
        <Tabs>
          <Tab $on>Home</Tab>
          {ribbonTabs.map((t) => <Tab key={t}>{t}</Tab>)}
          <TabExtra aria-label="Minimize ribbon">
            <Ico w={14} h={8}><rect width="14" height="8" rx="2" fill="#eee" /><path d="M4 5.500H10L7 2.500Z" fill="#333" /></Ico>
            <Caret w={5} h={3} />
          </TabExtra>
        </Tabs>
      </Header>

      <Ribbon>
        <Panel w={224} title="Draw">
          <Big w={42} label="Line" icon={<LineIcon />} />
          <Big w={45} label="Polyline" icon={<PolyIcon />} />
          <Big w={54} label="Circle" icon={<CircleIcon />} menu />
          <Big w={38} label="Arc" icon={<ArcIcon />} menu />
          <Tools w={44} items={[<RectIcon />, <EllipseIcon />, <HatchIcon />]} menus={[0, 1, 2]} />
        </Panel>
        <Panel w={133} title="Modify">
          <Tools w={29} items={[<MoveIcon />, <CopyIcon />, <StretchIcon />]} />
          <Tools w={29} items={[<RotateIcon />, <MirrorIcon />, <ScaleIcon />]} />
          <Tools w={43} items={[<TrimIcon />, <FilletIcon />, <ArrayIcon />]} menus={[0, 1, 2]} />
          <Tools w={28} items={[<BrushIcon />, <ExplodeIcon />, <OffsetIcon />]} />
        </Panel>
        <Panel w={86} title="Annotation">
          <Big w={46} label="Text" icon={<TextAIcon />} menu />
          <Tools w={38} items={[<DimIcon />, <LeaderIcon />, <TableIcon />]} menus={[0, 1]} />
        </Panel>
        <Panel w={273} title="Layers">
          <Big w={62} label={'Layer\nProperties'} tight icon={<LayerPropsIcon />} />
          <LayerArea>
            <LayerCombo>
              <BulbIcon /><SunIcon /><UnlockIcon /><Swatch />
              <LayerSelect aria-label="Layer"><option>Wall</option></LayerSelect>
              <Caret w={8} h={5} />
            </LayerCombo>
            <LayerGrid>
              {layerTools.map((T, i) => <LayerTool key={i} aria-label={`Layer tool ${i + 1}`}><T /></LayerTool>)}
            </LayerGrid>
          </LayerArea>
        </Panel>
        <Panel w={80} title="Block">
          <Big w={41} tight label="Insert" icon={<InsertIcon />} menu />
          <Tools w={38} items={[<BlockIcon />, <BlockEditIcon />, <AttIcon />]} menus={[2]} />
        </Panel>
        {folded.map(([label, icon]) => (
          <FoldedPanel key={label}>{icon}{label}<Caret w={8} h={5} /></FoldedPanel>
        ))}
      </Ribbon>

      <DocTabs>
        <DocTab>architectural_example-imperial*<Ico w={8} h={8}><path d="M0 0L8 8M8 0L0 8" stroke="#4a4a4a" strokeWidth="2" /></Ico></DocTab>
        <AddTab aria-label="New drawing"><Plus /></AddTab>
      </DocTabs>

      <Canvas>
        <Drawing />
        <ViewLabel>[−][Top][2D Wireframe]</ViewLabel>
        <Ucs width="80" height="76" fill="none" stroke="#f2f2f2" aria-hidden="true">
          <path d="M6.500 18V69.500H57" />
          <rect x="2.500" y="64.500" width="9" height="9" />
          <path d="M8 1L14 7L20 1M14 7V14M61 55L73 67M73 55L61 67" strokeWidth="1.200" />
        </Ucs>
        <ViewButtons>
          <IconBtn aria-label="Minimize view"><Ico w={11} h={12}><path d="M1 9H10" stroke="#fff" strokeWidth="3" /></Ico></IconBtn>
          <IconBtn aria-label="Restore view"><Ico w={11} h={12}><path d="M3 1.500H9.500V8M1 4.500H7V10H1Z" stroke="#fff" strokeWidth="1.600" /></Ico></IconBtn>
          <IconBtn aria-label="Close view"><Ico w={11} h={12}><path d="M1 2L9 10M9 2L1 10" stroke="#fff" strokeWidth="2.200" /></Ico></IconBtn>
        </ViewButtons>
        <ViewCube>
          <svg width="94" height="94" fill="none" fontFamily="Liberation Sans, sans-serif" fontWeight="700" textAnchor="middle">
            <circle cx="47" cy="47" r="38" stroke="#41454f" strokeWidth="8" />
            <rect x="29" y="29" width="36" height="36" fill="#aaaaac" />
            <rect x="36" y="36" width="22" height="22" fill="#9fa1a6" />
            <text x="47" y="51" fontSize="9" fill="#4a4c52">TOP</text>
            <g fontSize="15" fill="#a4a6ae">
              <text x="47" y="13">N</text><text x="47" y="92">S</text><text x="8" y="52">W</text><text x="86" y="52">E</text>
            </g>
          </svg>
        </ViewCube>
        <Wcs>WCS<Caret w={8} h={5} color="#a9acb6" /></Wcs>
        <NavBar>
          <svg width="31" height="210" fill="none" stroke="#383b44" strokeWidth="1.300">
            <circle cx="26" cy="5" r="3.500" /><path d="M24 3L28 7M28 3L24 7" />
            <path d="M16 19H26V30A10.500 10.500 0 1 1 16 19Z" /><circle cx="16" cy="29.500" r="5.500" /><path d="M8 36L12 33M24 36L20 33" />
            <path d="M13 50H19L16 53Z" fill="#383b44" stroke="none" />
            <path d="M11 83Q6 76 5 73Q7 71 11 75L9 65Q11 63 12.500 66L14 72V63Q16 60 17.500 63V72L20 63Q22 62 22.500 65L21.500 74L24 68Q27 68 26 71Q24 80 21 84Z" />
            <path d="M5 91L19 105M19 91L5 105M4 90H8M4 90V94M20 90H16M20 90V94M4 106V102M4 106H8" /><circle cx="20.500" cy="104" r="5" /><path d="M24 108L28 112" strokeWidth="3" />
            <path d="M13 120H19L16 123Z" fill="#383b44" stroke="none" />
            <path d="M14 149V134H11L15.500 128L20 134H18V149ZM12 136Q4 138 4 141Q5 145 14 146M20 136Q27 138 27 141Q25 145 18 146" />
            <path d="M13 158H19L16 161Z" fill="#383b44" stroke="none" />
            <path d="M4.500 169.500H9.500V175.500H4.500ZM12.500 169.500H17.500V175.500H12.500ZM20.500 169.500H26.500V175.500H20.500ZM4.500 178.500H20.500V191.500H4.500Z" /><path d="M9 181L16 185L9 189Z" fill="#383b44" />
            <circle cx="26" cy="205" r="3.500" /><path d="M24 205H28" />
          </svg>
        </NavBar>
        <QuestionMark>?</QuestionMark>
        <History>
          <HistoryLine $c="#b9c9ba">Total area = 242208.00 square in. (1682.0000 square ft.)</HistoryLine>
          <HistoryLine $c="#dde4dd">Specify first corner point or [Object/Add area/eXit]:</HistoryLine>
          <HistoryLine $c="#ffffff">Total area = 242208.00 square in. (1682.0000 square ft.)</HistoryLine>
        </History>
        <Tooltip>Total area = 242208.00 square in. (1682.0000 square ft.)<br />Enter an option</Tooltip>
        <OptionMenu>
          <Option>Distance</Option><Option>Radius</Option><Option>Angle</Option>
          <Option><Dot />ARea</Option><Option>Volume</Option><Option $on>eXit</Option>
        </OptionMenu>
        <Pointer width="14" height="20"><path d="M1 1V15L4.500 12L7 18.500L10 17.500L7.500 11.500H12Z" fill="#fff" stroke="#111" /></Pointer>
        <CommandBar>
          <CommandTools>
            <Ico w={6} h={17}><path d="M1.500 0V17M4.500 0V17" stroke="#c4c4c4" strokeWidth="2" strokeDasharray="2 1" /></Ico>
            <IconBtn aria-label="Close command line"><Ico w={10} h={10}><path d="M1 1L9 9M9 1L1 9" stroke="#eee" strokeWidth="2" /></Ico></IconBtn>
            <IconBtn aria-label="Customize command line"><Ico w={15} h={15}><path d="M1.500 3L4 5.500L5.500 4L3 1.500Q7 0 8 3V5.500L14 11.500Q14.500 14 12 14L6 7.500Q1.500 7.500 1.500 3Z" fill="#eee" /><circle cx="12" cy="12" r="1" fill="#555" /></Ico></IconBtn>
          </CommandTools>
          <CommandText>
            <IconBtn aria-label="Recent commands"><Ico w={15} h={8}><rect x=".5" y="2.500" width="14" height="4" fill="#f6b03c" stroke="#a3671a" /><path d="M3 3V5M6 3V5M9 3V5M12 3V5" stroke="#70410a" /></Ico><Caret w={6} h={4} color="#777" /></IconBtn>
            <strong>MEASUREGEOM</strong>
            <Prompt>
              <span>Enter an option [</span>
              <Chips>{chips.map(([a, b, c]) => <Chip key={b + c}>{a}<b>{b}</b>{c}</Chip>)}</Chips>
              <span>] &lt;ARea&gt;:</span>
            </Prompt>
          </CommandText>
          <Slot $w={16} aria-label="Expand history"><Ico w={8} h={4}><path d="M0 4L4 0L8 4Z" fill="#222" /></Ico></Slot>
        </CommandBar>
      </Canvas>

      <Status>
        <SheetTabs>
          <SheetTab $on>Model</SheetTab><SheetTab>Layout1</SheetTab><AddTab $foot aria-label="New layout"><Plus /></AddTab>
        </SheetTabs>
        <StatusCells>
          <Coordinates $w={183}>50'-3 21/32", 48'-10 1/4", 0'-0"</Coordinates>
          <Cell $w={48}>MODEL</Cell>
          <Cell $w={66}><GridIcon /><SnapIcon /><Caret w={7} h={4} /></Cell>
          <Cell $w={24}><DynIcon /></Cell>
          <Cell $w={102}><OrthoIcon /><PolarIcon /><Caret w={7} h={4} /><IsoIcon /><Caret w={7} h={4} /></Cell>
          <Cell $w={64}><TrackIcon /><OsnapIcon /><Caret w={7} h={4} /></Cell>
          <Cell $w={158}>
            <Human c={B} extra={<circle cx="13" cy="4" r="2.500" stroke={B} />} />
            <Human c={G} extra={<path d="M15 1L12 4H15L12 8" stroke={G} />} />
            <Human c={G} />
            <span>1'-0" = 1'-0"</span><Caret w={7} h={4} />
          </Cell>
          <Cell $w={41}><GearIcon /><Caret w={7} h={4} /></Cell>
          <Cell $w={25}><PlusBig /></Cell>
          <Cell $w={26}><QuickPropIcon /></Cell>
          <Cell $w={27}><LockUiIcon /></Cell>
          <Cell $w={51}><HwIcon /><IsolateIcon /></Cell>
          <Cell $w={50}><CleanIcon /><MenuIcon /></Cell>
        </StatusCells>
      </Status>
      <Watermark>InfiniteSkills.com</Watermark>
    </Shell>
  );
}
